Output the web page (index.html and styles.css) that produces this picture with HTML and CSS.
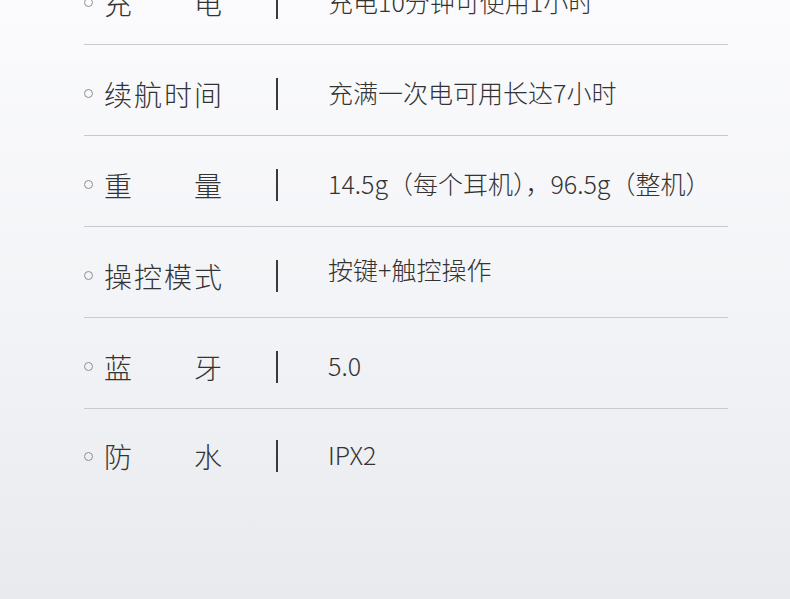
FILE: index.html
```html
<!DOCTYPE html>
<html lang="zh-CN">
<head>
    <meta charset="UTF-8">
    <meta name="viewport" content="width=device-width, initial-scale=1.0">
    <title>产品参数</title>
    <link rel="stylesheet" href="styles.css">
</head>
<body>
<div class="spec-list">
    <div class="spec-row">
        <span class="dot"></span>
        <span class="spec-name">充电</span>
        <span class="bar"></span>
        <span class="spec-value">充电10分钟可使用1小时</span>
    </div>
    <div class="spec-row">
        <span class="dot"></span>
        <span class="spec-name">续航时间</span>
        <span class="bar"></span>
        <span class="spec-value">充满一次电可用长达7小时</span>
    </div>
    <div class="spec-row">
        <span class="dot"></span>
        <span class="spec-name">重量</span>
        <span class="bar"></span>
        <span class="spec-value">14.5g（每个耳机），96.5g（整机）</span>
    </div>
    <div class="spec-row">
        <span class="dot"></span>
        <span class="spec-name">操控模式</span>
        <span class="bar"></span>
        <span class="spec-value raised">按键+触控操作</span>
    </div>
    <div class="spec-row">
        <span class="dot"></span>
        <span class="spec-name">蓝牙</span>
        <span class="bar"></span>
        <span class="spec-value">5.0</span>
    </div>
    <div class="spec-row last">
        <span class="dot"></span>
        <span class="spec-name">防水</span>
        <span class="bar"></span>
        <span class="spec-value">IPX2</span>
    </div>
</div>
</body>
</html>
```

FILE: styles.css
```css
body {
    margin: 0;
    padding: 0;
    height: 599px;
    overflow: hidden;
    font-family: "Noto Sans CJK SC", "Noto Sans", sans-serif;
    color: #333;
    background: linear-gradient(180deg, #fbfbfd 0%, #f3f4f7 50%, #e8eaed 100%);
}

.spec-list {
    margin: -46px 62px 0 84px;
}

.spec-row {
    display: flex;
    align-items: center;
    height: 91px;
    padding-top: 7px;
    box-sizing: border-box;
    border-bottom: 1px solid #c9cacd;
}

.spec-row.last {
    padding-top: 3px;
    border-bottom: none;
}

.dot {
    width: 7px;
    height: 7px;
    border: 1.5px solid #8e8e90;
    border-radius: 50%;
    flex-shrink: 0;
}

.spec-name {
    width: 118px;
    margin-left: 11px;
    font-size: 28px;
    font-weight: 300;
    text-align: justify;
    text-align-last: justify;
    white-space: nowrap;
}

.bar {
    width: 2px;
    height: 32px;
    margin-left: 54px;
    background-color: #3a3a3a;
}

.spec-value {
    margin-left: 50px;
    font-size: 25px;
    font-weight: 300;
    white-space: nowrap;
    margin-bottom: 4px;
}

.spec-value.raised {
    margin-bottom: 14px;
}
```
